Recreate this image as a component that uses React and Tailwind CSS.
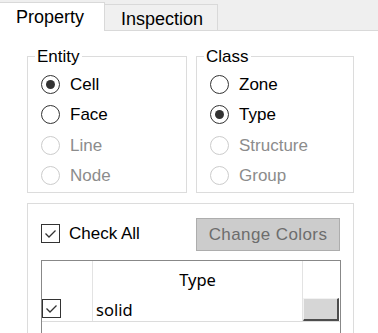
import React from "react";

function Radio({ checked, disabled, label }) {
  return (
    <div className="flex items-center h-[30.5px] pl-[13px]">
      <div
        className={
          "w-[19px] h-[19px] rounded-full border flex items-center justify-center bg-white " +
          (disabled ? "border-[#cccccc]" : "border-[#333333]")
        }
      >
        {checked && <div className="w-[9px] h-[9px] rounded-full bg-[#333333]" />}
      </div>
      <span
        className={
          "ml-[10px] text-[17px] leading-[19px] " +
          (disabled ? "text-[#8c8c8c]" : "text-black")
        }
      >
        {label}
      </span>
    </div>
  );
}

function Group({ title, width, children }) {
  return (
    <div className={"relative border border-[#dcdcdc] h-[137px] " + width}>
      <span className="absolute top-[-10px] left-[7px] px-[2px] bg-white text-[17px] leading-[19px] text-black">
        {title}
      </span>
      <div className="pt-[12px]">{children}</div>
    </div>
  );
}

function Check({ className = "" }) {
  return (
    <div className={"w-[19px] h-[19px] border border-[#333333] bg-white flex items-center justify-center " + className}>
      <svg width="15" height="15" viewBox="0 0 15 15">
        <path d="M2.5 7.5 L6 11 L12.5 4.5" fill="none" stroke="#333333" strokeWidth="1.3" />
      </svg>
    </div>
  );
}

export default function App() {
  return (
    <div
      className="w-[378px] h-[333px] overflow-hidden bg-white text-black"
      style={{ fontFamily: '"Liberation Sans", Arial, sans-serif' }}
    >
      {/* Tabs */}
      <div className="flex items-end h-[31px] bg-[#efefef]">
        <div className="w-[105px] h-[29px] bg-white border-t border-r border-[#d9d9d9] flex items-center pl-[16px] text-[18px] leading-[20px]">
          Property
        </div>
        <div className="w-[113px] h-[27px] bg-[#f0f0f0] border-t border-r border-b border-[#d9d9d9] flex items-center pl-[16px] pt-[3px] text-[18px] leading-[20px]">
          Inspection
        </div>
        <div className="flex-1 h-full border-b border-[#d9d9d9]" />
      </div>

      {/* Body */}
      <div className="pl-[27px] pt-[25px]">
        <div className="flex gap-[9px]">
          <Group title="Entity" width="w-[160px]">
            <Radio checked label="Cell" />
            <Radio label="Face" />
            <Radio disabled label="Line" />
            <Radio disabled label="Node" />
          </Group>
          <Group title="Class" width="w-[158px]">
            <Radio label="Zone" />
            <Radio checked label="Type" />
            <Radio disabled label="Structure" />
            <Radio disabled label="Group" />
          </Group>
        </div>

        <div className="mt-[10px] w-[327px] h-[140px] border border-b-0 border-[#dcdcdc] pl-[13px] pr-[13px] pt-[14px]">
          <div className="flex items-center justify-between">
            <div className="flex items-center mt-[-3px]">
              <Check />
              <span className="ml-[9px] text-[17px] leading-[19px]">Check All</span>
            </div>
            <div className="w-[144px] h-[33px] bg-[#cccccc] border border-[#adadad] flex items-center justify-center text-[17px] tracking-[0.4px] text-[#6d6d6d]">
              Change Colors
            </div>
          </div>

          <div
            className="mt-[9px] w-[300px] h-[80px] border border-b-0 border-[#888888]"
            style={{ fontFamily: '"Noto Sans", "Open Sans", sans-serif' }}
          >
            <div className="flex h-[37px]">
              <div className="w-[50px]" />
              <div className="w-[210px] border-l border-[#e3e3e3] flex items-center justify-center text-[16.5px] pt-[2px]">
                Type
              </div>
              <div className="w-[38px] border-l border-[#e3e3e3]" />
            </div>
            <div className="flex h-[24px] border-b border-[#dcdcdc]">
              <div className="w-[50px] pt-[1px]">
                <Check />
              </div>
              <div className="w-[210px] border-l border-[#e3e3e3] pl-[3px] flex items-center text-[16.5px] leading-[20px]">
                solid
              </div>
              <div className="w-[38px] border-l border-[#e3e3e3]">
                <div className="w-[36px] h-[23px] bg-[#d6d6d6] border-t border-l border-[#f2f2f2] border-r-2 border-b-2 border-r-[#4d4d4d] border-b-[#4d4d4d]" />
              </div>
            </div>
          </div>
        </div>
      </div>
    </div>
  );
}
